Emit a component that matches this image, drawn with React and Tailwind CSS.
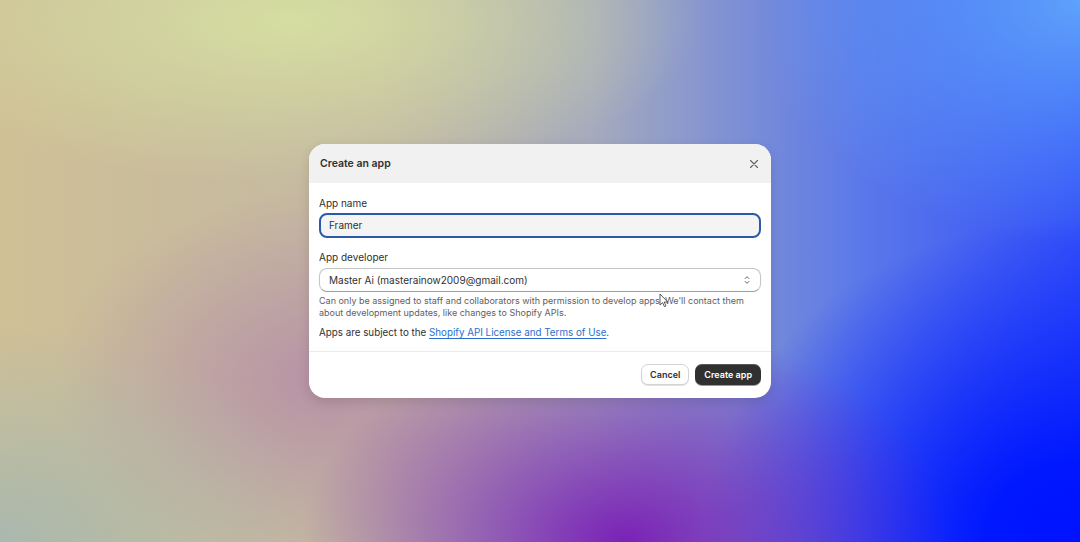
import React from 'react';

function CloseIcon() {
  return (
    <svg className="w-[10px] h-[10px] text-[#616161]" viewBox="0 0 10 10" fill="none" stroke="currentColor" strokeWidth={1.1} strokeLinecap="round">
      <path d="M1.5 1.5l7 7M8.5 1.5l-7 7" />
    </svg>
  );
}

function SelectIcon() {
  return (
    <svg className="w-3 h-3 text-[#616161]" viewBox="0 0 12 12" fill="none" stroke="currentColor" strokeWidth={1} strokeLinecap="round" strokeLinejoin="round">
      <path d="M4.2 4.5L6 2.7l1.8 1.8M4.2 7.5L6 9.3l1.8-1.8" />
    </svg>
  );
}

function Cursor() {
  return (
    <svg className="absolute left-[339px] top-[24px] w-[10px] h-[15px]" viewBox="0 0 10 15">
      <path d="M1 1v11l2.6-2.4 1.8 4 1.6-.7-1.8-3.9H8.8z" fill="#fff" stroke="#333" strokeWidth="0.8" strokeLinejoin="round" />
    </svg>
  );
}

export default function App() {
  return (
    <div className="w-[1080px] h-[542px] overflow-hidden flex items-center justify-center font-['Inter',sans-serif] bg-[radial-gradient(ellipse_38%_30%_at_27%_4%,#d5dea1_0%,transparent_100%),radial-gradient(ellipse_30%_40%_at_58%_100%,#7a22b6_0%,transparent_100%),radial-gradient(ellipse_35%_60%_at_100%_100%,#0012ff_0%,#0018ff_25%,transparent_100%),radial-gradient(ellipse_30%_45%_at_100%_0%,#5ea2fb_0%,transparent_100%),radial-gradient(ellipse_30%_40%_at_0%_100%,#a9b8ae_0%,transparent_100%),radial-gradient(ellipse_25%_35%_at_30%_70%,#b792a6_0%,transparent_100%),linear-gradient(to_right,#cfc096_0%,#c3b8a3_35%,#a5aabd_55%,#5a78ea_80%,#3350f8_100%)]">
      <div className="w-[462px] rounded-[16px] bg-white overflow-hidden shadow-[0_4px_12px_rgba(0,0,0,0.12)]">
        <div className="h-[39px] bg-[#f1f1f1] flex items-center justify-between pl-[11px] pr-[12px]">
          <span className="text-[10.5px] font-semibold text-[#303030]">Create an app</span>
          <CloseIcon />
        </div>
        <div className="px-[10px] pt-[13px] pb-[11px] relative">
          <div className="text-[10px] text-[#303030] leading-[14px]">App name</div>
          <div className="mt-[3px] h-[25px] rounded-[8px] border-2 border-[#2a5aa8] bg-[#f4f4f4] flex items-center px-[8px] text-[10px] text-[#303030]">
            Framer
          </div>
          <div className="mt-[12px] text-[10px] text-[#303030] leading-[14px]">App developer</div>
          <div className="mt-[4px] h-[24px] rounded-[8px] border border-[#c4c4c4] border-b-[#9e9e9e] bg-white flex items-center justify-between pl-[9px] pr-[7px] text-[10px] text-[#303030] relative">
            <span>Master Ai (masterainow2009@gmail.com)</span>
            <SelectIcon />
            <Cursor />
          </div>
          <p className="mt-[3px] text-[9px] leading-[12px] text-[#616161]">
            Can only be assigned to staff and collaborators with permission to develop apps. We'll contact them about development updates, like changes to Shopify APIs.
          </p>
          <p className="mt-[7px] text-[9.8px] leading-[14px] text-[#303030]">
            Apps are subject to the{' '}
            <a className="text-[#2c6ecb] underline underline-offset-2">Shopify API License and Terms of Use</a>.
          </p>
        </div>
        <div className="border-t border-[#ebebeb] flex justify-end gap-[6px] px-[10px] pt-[12px] pb-[13px]">
          <button className="h-[21px] px-[8px] rounded-[7px] bg-white border border-[#d4d4d4] shadow-[0_1px_0_rgba(0,0,0,0.12)] text-[9px] font-semibold text-[#303030]">
            Cancel
          </button>
          <button className="h-[21px] px-[9px] rounded-[7px] bg-[#303030] shadow-[inset_0_1px_0_rgba(255,255,255,0.2),0_1px_0_rgba(0,0,0,0.4)] text-[9px] font-semibold text-white">
            Create app
          </button>
        </div>
      </div>
    </div>
  );
}
